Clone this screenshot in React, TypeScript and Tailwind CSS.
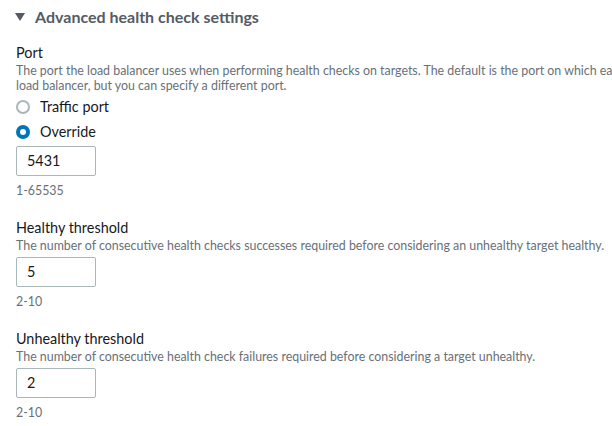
import React from "react";

const Radio = ({ checked, label }: { checked: boolean; label: string }) => (
  <label className="flex items-center h-[25px]">
    {checked ? (
      <span className="w-[14px] h-[14px] rounded-full bg-[#0073bb] flex items-center justify-center">
        <span className="w-[6px] h-[6px] rounded-full bg-white" />
      </span>
    ) : (
      <span className="w-[14px] h-[14px] rounded-full border-2 border-[#aab7b8] bg-white" />
    )}
    <span className="ml-[10px] text-[14.4px] text-[#16191f]">{label}</span>
  </label>
);

const NumberBox = ({ value }: { value: string }) => (
  <div className="w-[80px] h-[30px] border border-[#aab7b8] rounded-[2px] flex items-center px-[10px] text-[14.4px] text-[#16191f]">
    {value}
  </div>
);

const Field = ({
  title,
  desc,
  value,
  hint,
}: {
  title: string;
  desc: string;
  value: string;
  hint: string;
}) => (
  <div className="mt-[20px]">
    <div className="text-[14.4px] leading-[20px] text-[#16191f]">{title}</div>
    <div className="text-[12.4px] leading-[15px] text-[#687078] whitespace-nowrap">{desc}</div>
    <div className="mt-[4px]">
      <NumberBox value={value} />
    </div>
    <div className="mt-[8px] text-[12.4px] leading-[14px] text-[#687078]">{hint}</div>
  </div>
);

export default function App() {
  return (
    <div className="w-[612px] h-[426px] bg-white overflow-hidden font-['Lato',sans-serif] pl-[16px] pt-[6px]">
      {/* section header */}
      <div className="flex items-center h-[22px]">
        <svg width="10" height="8" viewBox="0 0 10 8" className="-ml-[1px]">
          <path d="M0 0h10L5 8z" fill="#545b64" />
        </svg>
        <span className="ml-[10px] text-[16px] font-bold text-[#545b64]">
          Advanced health check settings
        </span>
      </div>

      {/* Port */}
      <div className="mt-[15px]">
        <div className="text-[14.4px] leading-[20px] text-[#16191f]">Port</div>
        <div className="text-[12.4px] leading-[15px] text-[#687078] whitespace-nowrap">
          The port the load balancer uses when performing health checks on targets. The default is the port on which each target receives traffic from the
          <br />
          load balancer, but you can specify a different port.
        </div>
        <div className="mt-[1px]">
          <Radio checked={false} label="Traffic port" />
          <Radio checked label="Override" />
        </div>
        <div className="mt-[2px]">
          <NumberBox value="5431" />
        </div>
        <div className="mt-[8px] text-[12.4px] leading-[14px] text-[#687078]">1-65535</div>
      </div>

      <Field
        title="Healthy threshold"
        desc="The number of consecutive health checks successes required before considering an unhealthy target healthy."
        value="5"
        hint="2-10"
      />
      <Field
        title="Unhealthy threshold"
        desc="The number of consecutive health check failures required before considering a target unhealthy."
        value="2"
        hint="2-10"
      />
    </div>
  );
}
